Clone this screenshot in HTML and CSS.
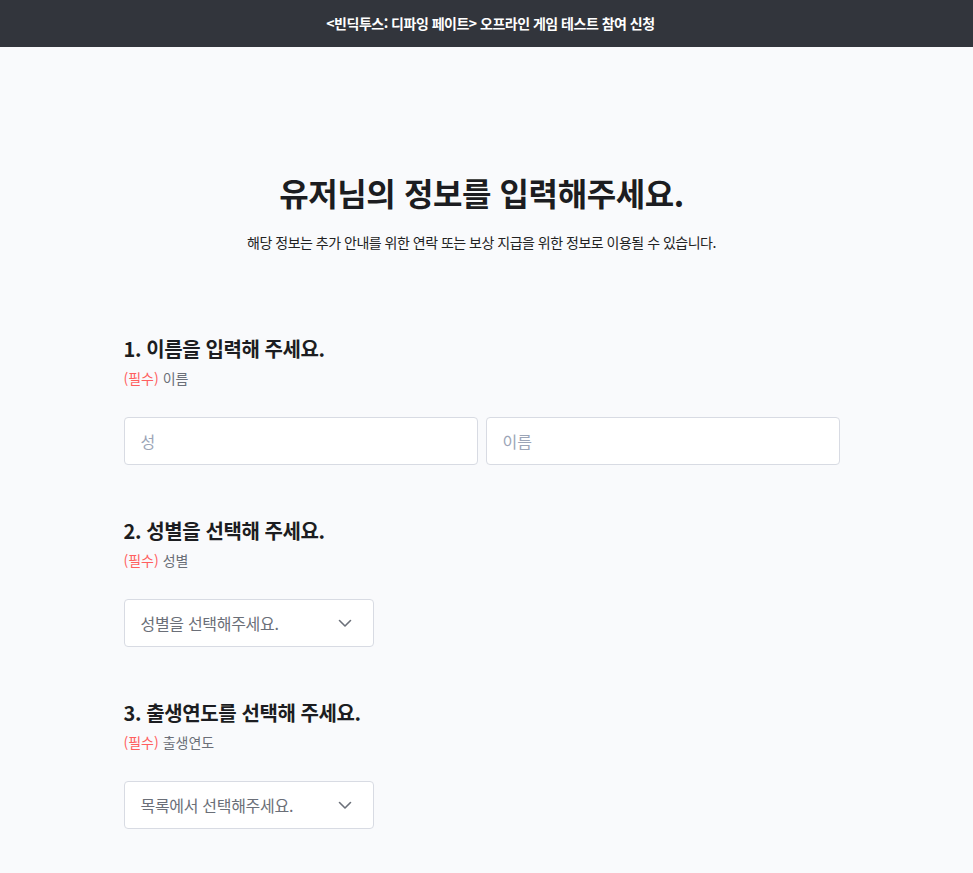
FILE: index.html
```html
<!DOCTYPE html>
<html lang="ko">

<head>
    <meta charset="UTF-8">
    <meta name="viewport" content="width=device-width, initial-scale=1.0">
    <title>테스트 참여 신청</title>
    <link rel="stylesheet" href="styles.css">
</head>

<body>
    <header class="topbar">&lt;빈딕투스: 디파잉 페이트&gt; 오프라인 게임 테스트 참여 신청</header>
    <main class="page">
        <h1 class="title">유저님의 정보를 입력해주세요.</h1>
        <p class="desc">해당 정보는 추가 안내를 위한 연락 또는 보상 지급을 위한 정보로 이용될 수 있습니다.</p>

        <section class="field">
            <h2 class="field-title">1. 이름을 입력해 주세요.</h2>
            <p class="field-label"><span class="req">(필수)</span> 이름</p>
            <div class="name-row">
                <input class="text-input" type="text" placeholder="성">
                <input class="text-input" type="text" placeholder="이름">
            </div>
        </section>

        <section class="field">
            <h2 class="field-title">2. 성별을 선택해 주세요.</h2>
            <p class="field-label"><span class="req">(필수)</span> 성별</p>
            <div class="select">
                <span>성별을 선택해주세요.</span>
                <svg width="16" height="16" viewBox="0 0 16 16"><path d="M2.5 5.5 8 11l5.5-5.5" fill="none" stroke="#6b7079" stroke-width="1.6" stroke-linecap="round" stroke-linejoin="round"/></svg>
            </div>
        </section>

        <section class="field">
            <h2 class="field-title">3. 출생연도를 선택해 주세요.</h2>
            <p class="field-label"><span class="req">(필수)</span> 출생연도</p>
            <div class="select">
                <span>목록에서 선택해주세요.</span>
                <svg width="16" height="16" viewBox="0 0 16 16"><path d="M2.5 5.5 8 11l5.5-5.5" fill="none" stroke="#6b7079" stroke-width="1.6" stroke-linecap="round" stroke-linejoin="round"/></svg>
            </div>
        </section>
    </main>
</body>

</html>
```

FILE: styles.css
```css
* {
    box-sizing: border-box;
}
body {
    margin: 0;
    background-color: #f9fafc;
    font-family: "Noto Sans CJK KR", "Noto Sans", sans-serif;
    color: #1c1d21;
}
.topbar {
    height: 47px;
    line-height: 47px;
    padding-left: 8px;
    background-color: #32353c;
    color: #fff;
    font-size: 14px;
    font-weight: 700;
    letter-spacing: -0.5px;
    text-align: center;
}
.page {
    width: 726px;
    margin: 0 auto;
    padding: 123px 10px 0 0;
}
.title {
    margin: 0;
    font-size: 32px;
    line-height: 44px;
    font-weight: 700;
    letter-spacing: -0.4px;
    text-align: center;
}
.desc {
    margin: 18px 0 0;
    font-size: 14px;
    line-height: 20px;
    letter-spacing: -0.5px;
    text-align: center;
    color: #222;
}
.field {
    margin-top: 52px;
}
.desc + .field {
    margin-top: 83px;
}
.field-title {
    margin: 0;
    font-size: 20px;
    line-height: 28px;
    font-weight: 700;
    letter-spacing: -0.4px;
}
.field-label {
    margin: 5px 0 0;
    font-size: 14px;
    line-height: 20px;
    color: #6b6f78;
}
.req {
    color: #ff5f5f;
}
.name-row {
    display: flex;
    gap: 8px;
    margin-top: 29px;
}
.text-input {
    flex: 1;
    min-width: 0;
    height: 48px;
    padding: 0 16px;
    border: 1px solid #d8dbe3;
    border-radius: 4px;
    background-color: #fff;
    font-family: inherit;
    font-size: 16px;
    color: #1c1d21;
    outline: none;
}
.text-input::placeholder {
    color: #9ca5b7;
}
.select {
    display: flex;
    align-items: center;
    justify-content: space-between;
    width: 250px;
    height: 48px;
    margin-top: 29px;
    padding: 0 20px 0 16px;
    border: 1px solid #d8dbe3;
    border-radius: 4px;
    background-color: #fff;
    font-size: 16px;
    letter-spacing: -0.3px;
    color: #6b6f78;
}
```
